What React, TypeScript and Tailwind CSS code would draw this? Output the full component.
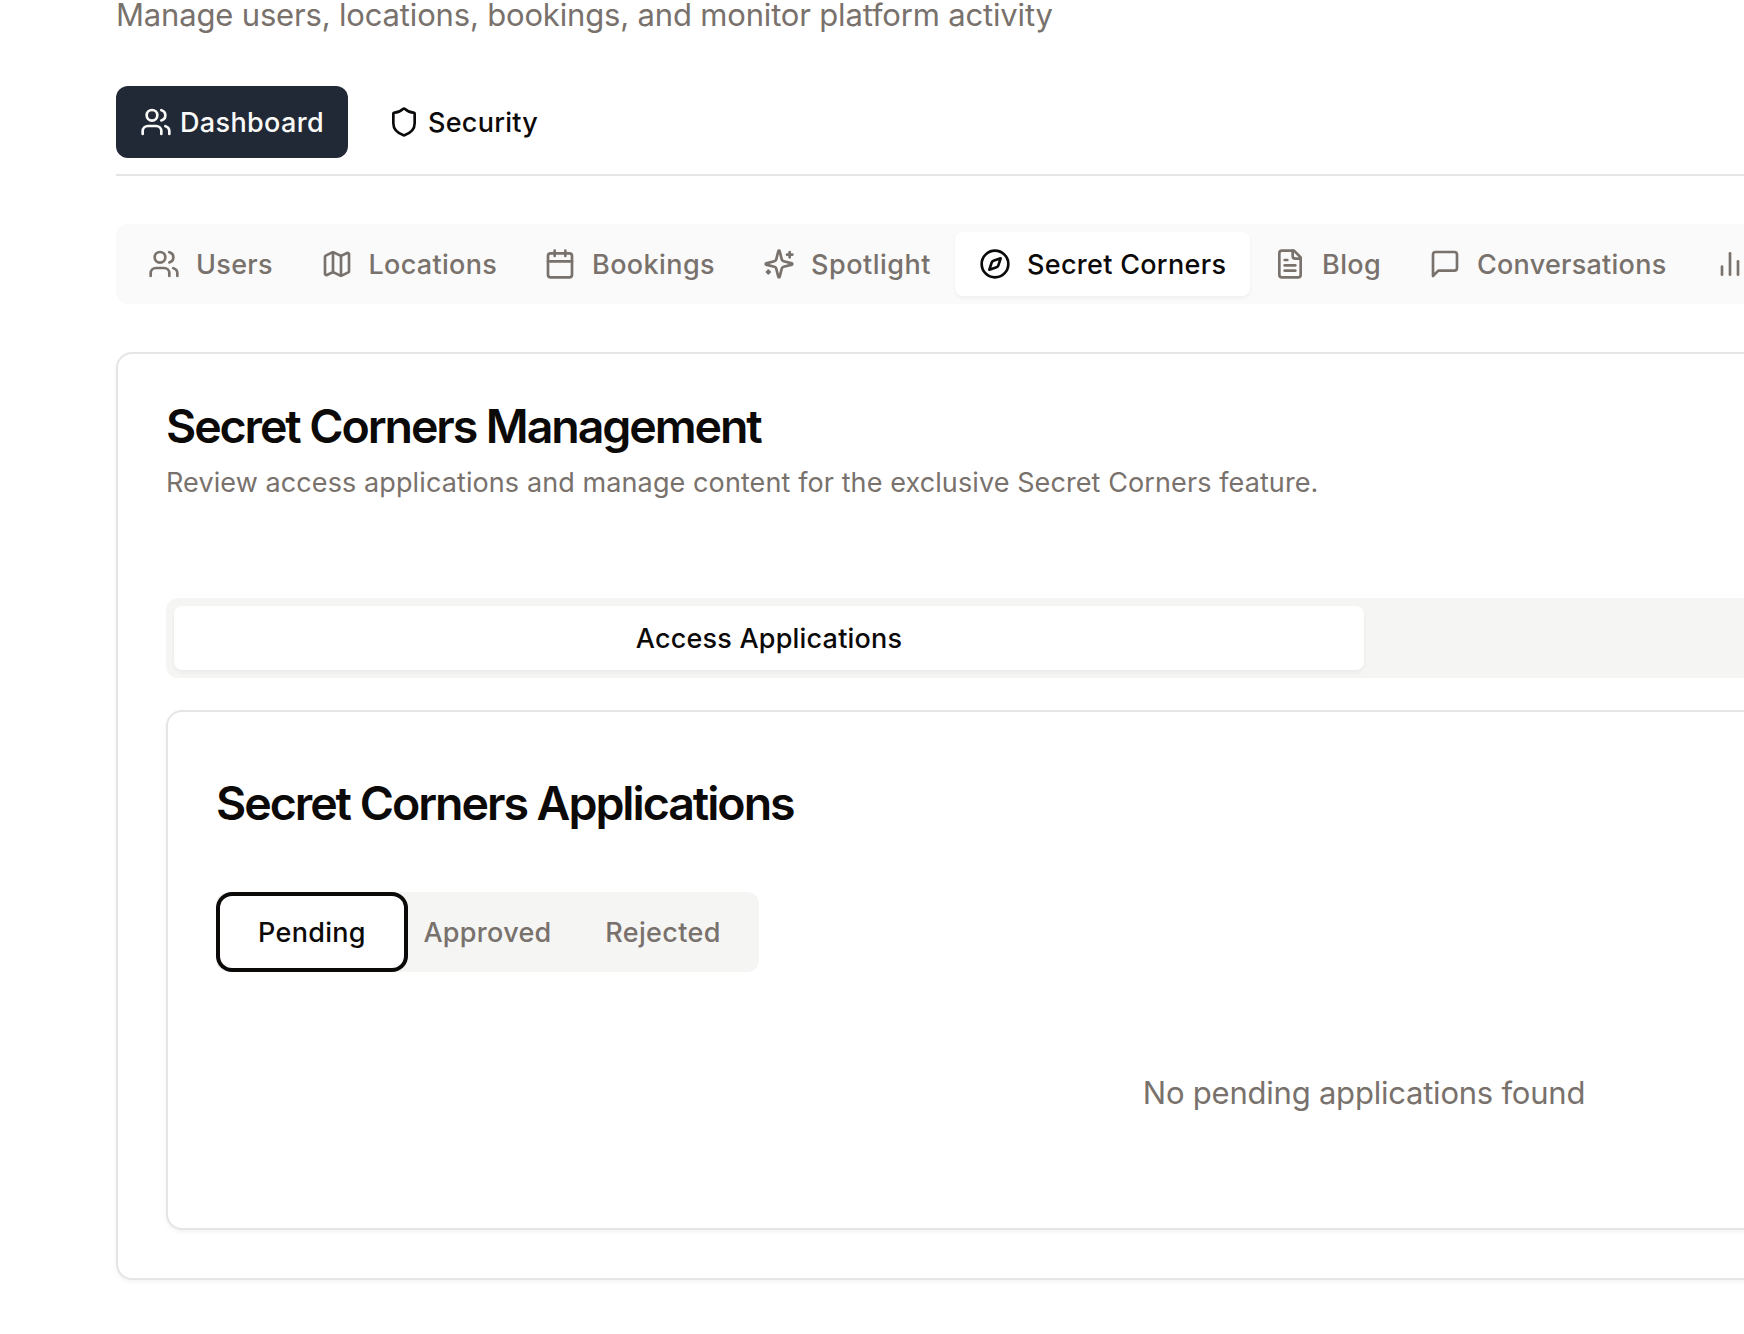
import React from "react";
import { Users, Map as MapIcon, Calendar, Compass, Shield } from "lucide-react";

function Glyph({ paths }: { paths: string[] }) {
  return (
    <svg className="size-8 shrink-0" viewBox="0 0 24 24" fill="none" stroke="currentColor" strokeWidth={2} strokeLinecap="round" strokeLinejoin="round">
      {paths.map((d) => (
        <path key={d} d={d} />
      ))}
    </svg>
  );
}

const sparkles = [
  "M9.937 15.5A2 2 0 0 0 8.5 14.063l-6.135-1.582a.5.5 0 0 1 0-.962L8.5 9.936A2 2 0 0 0 9.937 8.5l1.582-6.135a.5.5 0 0 1 .963 0L14.063 8.5A2 2 0 0 0 15.5 9.937l6.135 1.581a.5.5 0 0 1 0 .964L15.5 14.063a2 2 0 0 0-1.437 1.437l-1.582 6.135a.5.5 0 0 1-.963 0z",
  "M20 3v4",
  "M22 5h-4",
  "M4 17v2",
  "M5 18H3",
];
const fileText = [
  "M15 2H6a2 2 0 0 0-2 2v16a2 2 0 0 0 2 2h12a2 2 0 0 0 2-2V7Z",
  "M14 2v4a2 2 0 0 0 2 2h4",
  "M10 9H8",
  "M16 13H8",
  "M16 17H8",
];
const message = ["M21 15a2 2 0 0 1-2 2H7l-4 4V5a2 2 0 0 1 2-2h14a2 2 0 0 1 2 2z"];
const bars = ["M18 20V10", "M12 20V4", "M6 20v-6"];

const tabs = [
  { label: "Users", icon: <Users className="size-8 shrink-0" />, size: "w-[172.5px]", track: "tracking-[0.3px]" },
  { label: "Locations", icon: <MapIcon className="size-8 shrink-0" />, size: "w-[223.5px]", track: "tracking-[0.3px]" },
  { label: "Bookings", icon: <Calendar className="size-8 shrink-0" />, size: "w-[219px]", track: "tracking-[0.4px]" },
  { label: "Spotlight", icon: <Glyph paths={sparkles} />, size: "w-[216px]", track: "tracking-[0.5px]" },
  { label: "Secret Corners", icon: <Compass className="size-8 shrink-0" />, size: "w-[295px]", track: "tracking-[0.3px]", active: true },
  { label: "Blog", icon: <Glyph paths={fileText} />, size: "w-[155px]", track: "tracking-[0.4px]" },
  { label: "Conversations", icon: <Glyph paths={message} />, size: "w-[285px]", track: "tracking-[0.25px]" },
];

export default function App() {
  return (
    <div className="h-[1334px] w-[1744px] overflow-hidden bg-white font-['Inter',sans-serif] text-[27px] text-[#0c0a09]">
      <div className="w-[2728px] px-[116px]">
        <p className="h-[30px] text-[31px] leading-[30px] tracking-[-0.17px] whitespace-nowrap text-[#78716c]">
          Manage users, locations, bookings, and monitor platform activity
        </p>

        <div className="mt-14 flex gap-4 border-b-2 border-[#e5e5e5] pb-4 font-medium">
          <button className="flex h-[72px] w-[232px] items-center gap-2 rounded-xl bg-[#222936] px-6 text-[#fafaf9]">
            <Users className="size-8 shrink-0" />
            <span className="pt-0.5 tracking-[0.35px]">Dashboard</span>
          </button>
          <button className="flex h-[72px] items-center gap-2 rounded-xl px-6">
            <Shield className="size-8 shrink-0" />
            <span className="pt-0.5 tracking-[0.25px]">Security</span>
          </button>
        </div>

        <div className="mt-12 flex h-20 items-center rounded-xl bg-[#fafafa] p-2 font-medium text-[#78716c]">
          {tabs.map((t) => (
            <button
              key={t.label}
              className={`flex h-16 shrink-0 items-center gap-4 rounded-lg px-6 whitespace-nowrap ${t.size} ${t.track} ${t.active ? "bg-white text-[#0c0a09] shadow-[0_2px_4px_rgba(0,0,0,0.05)]" : ""}`}
            >
              {t.icon}
              <span className="pt-0.5">{t.label}</span>
            </button>
          ))}
          <button className="flex h-16 shrink-0 items-center px-6">
            <Glyph paths={bars} />
          </button>
        </div>

        <section className="mt-12 h-[928px] rounded-2xl border-2 border-[#e5e5e5] bg-white px-12 pt-12 shadow-[0_2px_4px_rgba(0,0,0,0.05)]">
          <h2 className="h-12 text-[46.5px] leading-[48px] font-semibold tracking-[-2.08px] whitespace-nowrap">Secret Corners Management</h2>
          <p className="mt-[13px] h-[39px] leading-10 tracking-[0.1px] text-[#78716c]">
            Review access applications and manage content for the exclusive Secret Corners feature.
          </p>

          <div className="mt-24 flex h-20 rounded-xl bg-[#f5f5f4] p-2 font-medium">
            <button className="h-16 flex-1 rounded-lg bg-white pt-0.5 tracking-[0.2px] shadow-[0_2px_4px_rgba(0,0,0,0.05)]">Access Applications</button>
            <div className="h-16 flex-1" />
          </div>

          <div className="mt-8 h-[520px] rounded-2xl border-2 border-[#e5e5e5] bg-white px-12 pt-[63px] shadow-[0_2px_4px_rgba(0,0,0,0.05)]">
            <h3 className="h-14 text-[46.5px] leading-[56px] font-semibold tracking-[-2.03px] whitespace-nowrap">Secret Corners Applications</h3>

            <div className="mt-[61px] flex h-20 w-[543px] rounded-xl bg-[#f5f5f4] p-2 font-medium text-[#78716c]">
              <button className="h-16 w-44 rounded-lg bg-white pt-0.5 tracking-[0.3px] text-[#0c0a09] ring-4 ring-[#0c0a09] ring-offset-4 ring-offset-white">Pending</button>
              <button className="h-16 w-[175px] pt-0.5 tracking-[0.3px]">Approved</button>
              <button className="h-16 w-44 pt-0.5 tracking-[0.35px]">Rejected</button>
            </div>

            <p className="mt-[97px] text-center text-[31px] leading-[48px] tracking-[-0.22px] text-[#78716c]">No pending applications found</p>
          </div>
        </section>
      </div>
    </div>
  );
}
